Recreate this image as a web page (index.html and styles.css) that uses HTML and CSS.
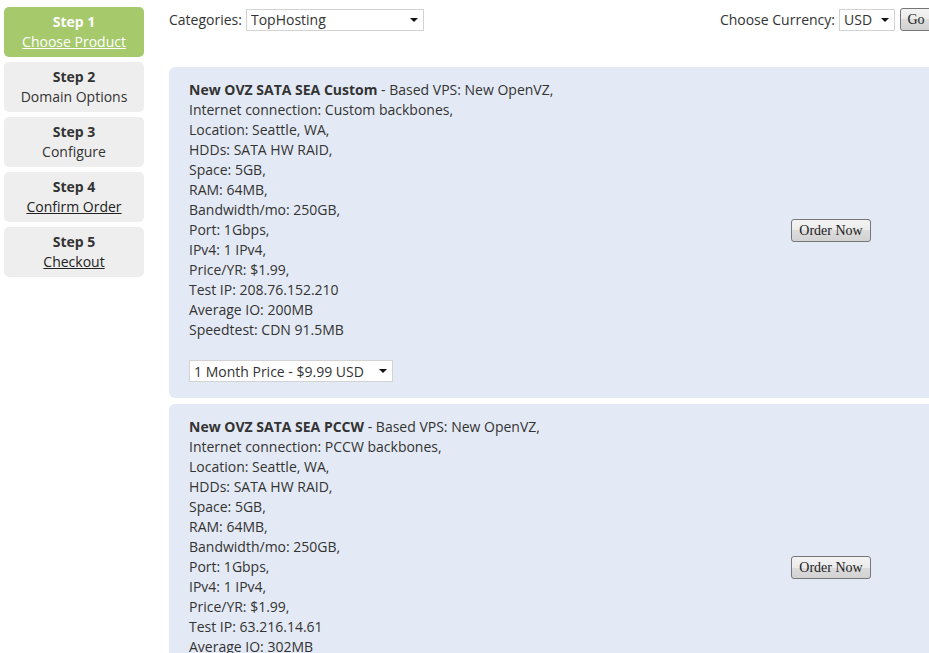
FILE: index.html
```html
<!DOCTYPE html>
<html>
<head>
<meta charset="utf-8">
<title>Order</title>
<link rel="stylesheet" href="styles.css">
</head>
<body>
<div class="page">
  <nav class="steps">
    <div class="step step-active"><strong>Step 1</strong><a href="#" class="step-link">Choose Product</a></div>
    <div class="step"><strong>Step 2</strong><span>Domain Options</span></div>
    <div class="step"><strong>Step 3</strong><span>Configure</span></div>
    <div class="step"><strong>Step 4</strong><a href="#" class="step-link">Confirm Order</a></div>
    <div class="step"><strong>Step 5</strong><a href="#" class="step-link">Checkout</a></div>
  </nav>
  <main class="main">
    <div class="topbar">
      <label class="field">Categories:
        <span class="sel sel-cat"><select><option>TopHosting</option></select></span>
      </label>
      <div class="field">Choose Currency:
        <span class="sel sel-cur"><select><option>USD</option></select></span>
        <button class="btn btn-go">Go</button>
      </div>
    </div>

    <div class="card">
      <div class="desc">
        <p><strong>New OVZ SATA SEA Custom</strong> - Based VPS: New OpenVZ,<br>
        Internet connection: Custom backbones,<br>
        Location: Seattle, WA,<br>
        HDDs: SATA HW RAID,<br>
        Space: 5GB,<br>
        RAM: 64MB,<br>
        Bandwidth/mo: 250GB,<br>
        Port: 1Gbps,<br>
        IPv4: 1 IPv4,<br>
        Price/YR: $1.99,<br>
        Test IP: 208.76.152.210<br>
        Average IO: 200MB<br>
        Speedtest: CDN 91.5MB</p>
        <span class="sel sel-price"><select><option>1 Month Price - $9.99 USD</option></select></span>
      </div>
      <div class="action"><button class="btn btn-order">Order Now</button></div>
    </div>

    <div class="card">
      <div class="desc">
        <p><strong>New OVZ SATA SEA PCCW</strong> - Based VPS: New OpenVZ,<br>
        Internet connection: PCCW backbones,<br>
        Location: Seattle, WA,<br>
        HDDs: SATA HW RAID,<br>
        Space: 5GB,<br>
        RAM: 64MB,<br>
        Bandwidth/mo: 250GB,<br>
        Port: 1Gbps,<br>
        IPv4: 1 IPv4,<br>
        Price/YR: $1.99,<br>
        Test IP: 63.216.14.61<br>
        Average IO: 302MB<br>
        Speedtest: CDN 91.5MB</p>
        <span class="sel sel-price"><select><option>1 Month Price - $9.99 USD</option></select></span>
      </div>
      <div class="action"><button class="btn btn-order">Order Now</button></div>
    </div>
  </main>
</div>
</body>
</html>
```

FILE: styles.css
```css
html {
  overflow: hidden;
}
body {
  margin: 0;
  font-family: "Open Sans", "Noto Sans", sans-serif;
  font-size: 14px;
  line-height: 20px;
  color: #333;
  background: #fff;
}
.page {
  display: flex;
  align-items: flex-start;
  padding: 7px 0 0 4px;
}
.steps {
  flex: 0 0 140px;
  display: flex;
  flex-direction: column;
  gap: 5px;
}
.step {
  display: flex;
  flex-direction: column;
  align-items: center;
  height: 50px;
  box-sizing: border-box;
  padding: 5px 0;
  background: #eeeeee;
  border-radius: 5px;
  text-align: center;
}
.step strong {
  font-weight: 700;
}
.step-link {
  color: #222;
  text-decoration: underline;
}
.step-active {
  background: #a6c96c;
  color: #fff;
}
.step-active .step-link {
  color: #fff;
}
.main {
  flex: 0 0 800px;
  margin-left: 25px;
}
.topbar {
  width: 763px;
  height: 23px;
  margin-top: 1px;
  margin-bottom: 36px;
  display: flex;
  justify-content: space-between;
  align-items: center;
  line-height: 19px;
}
.field {
  display: flex;
  align-items: center;
  gap: 4px;
}
.sel {
  position: relative;
  display: inline-block;
}
.sel select {
  appearance: none;
  -webkit-appearance: none;
  display: block;
  height: 22px;
  box-sizing: border-box;
  border: 1px solid #d3d3d3;
  border-radius: 0;
  background: #fff;
  font-family: "Open Sans", "Noto Sans", sans-serif;
  font-size: 14px;
  color: #333;
  padding: 0 4px;
  margin: 0;
}
.sel::after {
  content: "";
  position: absolute;
  right: 6px;
  top: 9px;
  border-top: 4px solid #111;
  border-left: 4px solid transparent;
  border-right: 4px solid transparent;
  pointer-events: none;
}
.sel-cat select { width: 178px; }
.sel-cur select { width: 56px; }
.sel-price select { width: 204px; }
.btn {
  font-family: "Liberation Serif", "Times New Roman", serif;
  font-size: 14px;
  line-height: 17px;
  color: #1c1c1c;
  border: 1px solid #767676;
  border-radius: 3px;
  background: linear-gradient(#f3f3f3 0%, #ebebeb 50%, #dcdcdc 50%, #d2d2d2 100%);
  padding: 2px 6px 2px;
  height: 23px;
  box-sizing: border-box;
  margin: 0;
}
.btn-go {
  margin-left: 1px;
  width: 32px;
  padding: 2px 5px;
}
.btn-order {
  width: 80px;
  padding: 2px 4px;
}
.card {
  display: grid;
  grid-template-columns: 602px auto;
  align-items: center;
  background: #e4eaf5;
  border-radius: 6px;
  padding: 12px 20px 16px;
  margin-bottom: 6px;
}
.desc p {
  margin: 0 0 20px;
  padding-top: 1px;
}
.desc strong {
  font-weight: 700;
}
.action {
  display: flex;
  align-items: center;
}
```
